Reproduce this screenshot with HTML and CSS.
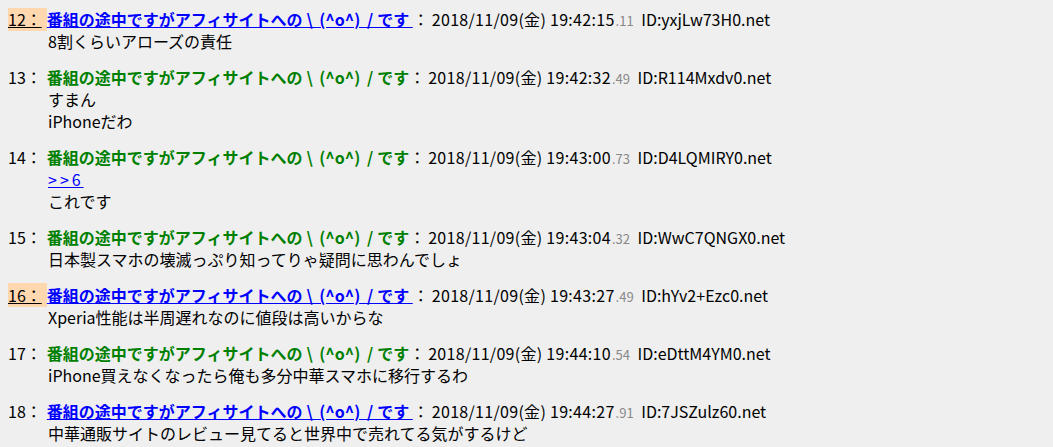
FILE: index.html
```html
<!DOCTYPE html>
<html lang="ja">

<head>
    <meta charset="UTF-8">
    <title>スレッド</title>
    <link rel="stylesheet" href="styles.css">
</head>

<body>
    <dl class="thread">
        <dt><span class="num mark">12：</span><a class="name" href="#"><b>番組の途中ですがアフィサイトへの&#8197;\&#8197;&#8198;(^o^)&#8197;&#8198;/&#8197;です </b></a><span class="sep">：</span><span class="date">2018/11/09(金) 19:42:15</span><span class="ms">.11</span> ID:yxjLw73H0.net</dt>
        <dd><span class="ln">8割くらいアローズの責任</span></dd>

        <dt><span class="num">13：</span><span class="name green"><b>番組の途中ですがアフィサイトへの&#8197;\&#8197;&#8198;(^o^)&#8197;&#8198;/&#8197;です</b></span><span class="sep">：</span><span class="date">2018/11/09(金) 19:42:32</span><span class="ms">.49</span> ID:R114Mxdv0.net</dt>
        <dd><span class="ln">すまん</span><span class="ln">iPhoneだわ</span></dd>

        <dt><span class="num">14：</span><span class="name green"><b>番組の途中ですがアフィサイトへの&#8197;\&#8197;&#8198;(^o^)&#8197;&#8198;/&#8197;です</b></span><span class="sep">：</span><span class="date">2018/11/09(金) 19:43:00</span><span class="ms">.73</span> ID:D4LQMIRY0.net</dt>
        <dd><span class="ln"><a class="anchor" href="#">&gt;&gt;6</a></span><span class="ln">これです</span></dd>

        <dt><span class="num">15：</span><span class="name green"><b>番組の途中ですがアフィサイトへの&#8197;\&#8197;&#8198;(^o^)&#8197;&#8198;/&#8197;です</b></span><span class="sep">：</span><span class="date">2018/11/09(金) 19:43:04</span><span class="ms">.32</span> ID:WwC7QNGX0.net</dt>
        <dd><span class="ln">日本製スマホの壊滅っぷり知ってりゃ疑問に思わんでしょ</span></dd>

        <dt><span class="num mark">16：</span><a class="name" href="#"><b>番組の途中ですがアフィサイトへの&#8197;\&#8197;&#8198;(^o^)&#8197;&#8198;/&#8197;です </b></a><span class="sep">：</span><span class="date">2018/11/09(金) 19:43:27</span><span class="ms">.49</span> ID:hYv2+Ezc0.net</dt>
        <dd><span class="ln">Xperia性能は半周遅れなのに値段は高いからな</span></dd>

        <dt><span class="num">17：</span><span class="name green"><b>番組の途中ですがアフィサイトへの&#8197;\&#8197;&#8198;(^o^)&#8197;&#8198;/&#8197;です</b></span><span class="sep">：</span><span class="date">2018/11/09(金) 19:44:10</span><span class="ms">.54</span> ID:eDttM4YM0.net</dt>
        <dd><span class="ln">iPhone買えなくなったら俺も多分中華スマホに移行するわ</span></dd>

        <dt><span class="num">18：</span><a class="name" href="#"><b>番組の途中ですがアフィサイトへの&#8197;\&#8197;&#8198;(^o^)&#8197;&#8198;/&#8197;です </b></a><span class="sep">：</span><span class="date">2018/11/09(金) 19:44:27</span><span class="ms">.91</span> ID:7JSZulz60.net</dt>
        <dd><span class="ln">中華通販サイトのレビュー見てると世界中で売れてる気がするけど</span></dd>
    </dl>
</body>

</html>
```

FILE: styles.css
```css
body {
    margin: 8px;
    background-color: #efefef;
    color: #000;
    font-family: "Noto Sans CJK JP", sans-serif;
    font-size: 16px;
}

.thread {
    margin: 0;
}

.thread dt {
    height: 22px;
    line-height: 22px;
    white-space: nowrap;
}

.thread dd {
    margin: 0 0 14px 40px;
}

.ln {
    display: block;
    height: 22px;
    line-height: 22px;
    white-space: nowrap;
}

.num {
    padding-right: 5px;
}

.num.mark {
    background-color: #ffd8b0;
    text-decoration: underline;
}

.name {
    color: #0000ff;
}

.name.green {
    color: #008000;
}

.sep {
    padding-right: 3px;
}

.date {
    letter-spacing: 0.3px;
}

.ms {
    color: #888;
    font-size: 13px;
    line-height: 1;
    padding-left: 1px;
    padding-right: 4px;
}

.anchor {
    color: #0000ff;
    letter-spacing: 3px;
}
```
